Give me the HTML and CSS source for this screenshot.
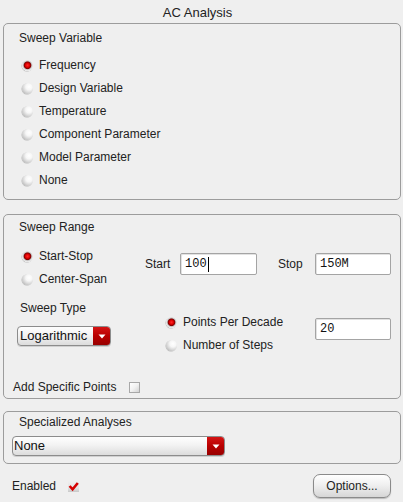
FILE: index.html
```html
<!DOCTYPE html>
<html>
<head>
<meta charset="utf-8">
<link rel="stylesheet" href="styles.css">
</head>
<body>
<div class="title">AC Analysis</div>

<section class="group g1">
  <div class="legend">Sweep Variable</div>
  <div class="radio-list">
    <div class="radio-row"><span class="radio on"></span>Frequency</div>
    <div class="radio-row"><span class="radio"></span>Design Variable</div>
    <div class="radio-row"><span class="radio"></span>Temperature</div>
    <div class="radio-row"><span class="radio"></span>Component Parameter</div>
    <div class="radio-row"><span class="radio"></span>Model Parameter</div>
    <div class="radio-row"><span class="radio"></span>None</div>
  </div>
</section>

<section class="group g2">
  <div class="legend">Sweep Range</div>
  <div class="range-row">
    <div class="radio-col">
      <div class="radio-row"><span class="radio on"></span>Start-Stop</div>
      <div class="radio-row"><span class="radio"></span>Center-Span</div>
    </div>
    <div class="field">
      <span class="field-label start-label">Start</span>
      <span class="input in-start">100<span class="caret"></span></span>
    </div>
    <div class="field">
      <span class="field-label stop-label">Stop</span>
      <span class="input in-stop">150M</span>
    </div>
  </div>
  <div class="type-row">
    <div class="type-col">
      <div class="sublabel">Sweep Type</div>
      <div class="select sel-log">
        <span class="select-text">Logarithmic</span>
        <span class="select-btn"><svg width="8" height="5" viewBox="0 0 8 5"><path d="M0.5 0.5 L7.5 0.5 L4 4.5 Z" fill="#fff"/></svg></span>
      </div>
    </div>
    <div class="points-col">
      <div class="radio-row"><span class="radio on"></span>Points Per Decade</div>
      <div class="radio-row"><span class="radio"></span>Number of Steps</div>
    </div>
    <span class="input in-steps">20</span>
  </div>
  <div class="add-row">Add Specific Points<span class="checkbox"></span></div>
</section>

<section class="group g3">
  <div class="legend">Specialized Analyses</div>
  <div class="select sel-none">
    <span class="select-text">None</span>
    <span class="select-btn"><svg width="8" height="5" viewBox="0 0 8 5"><path d="M0.5 0.5 L7.5 0.5 L4 4.5 Z" fill="#fff"/></svg></span>
  </div>
</section>

<div class="bottom-row">
  <span class="enabled">Enabled</span>
  <span class="checkmark"><svg width="11" height="11" viewBox="0 0 11 11"><path d="M1.6 5.0 L4.6 8.3 L9.8 2.0" fill="none" stroke="#d40000" stroke-width="2.6" stroke-linejoin="miter"/></svg></span>
  <span class="spacer"></span>
  <span class="button">Options...</span>
</div>
</body>
</html>
```

FILE: styles.css
```css
html, body {
  margin: 0;
  padding: 0;
}
body {
  width: 403px;
  height: 502px;
  background: #efefef;
  font-family: "Liberation Sans", Arial, sans-serif;
  font-size: 12px;
  color: #222222;
  overflow: hidden;
}
.title {
  height: 21px;
  padding-top: 2px;
  line-height: 21px;
  font-size: 13px;
  text-align: center;
  padding-right: 8px;
}
.group {
  margin: 0 2px 0 3px;
  border: 1px solid #9c9c9c;
  border-radius: 5px;
  box-sizing: border-box;
}
.legend {
  line-height: 16px;
  height: 16px;
  margin-left: 15px;
}
.g1 {
  padding-bottom: 7px;
}
.g1 .legend {
  margin-top: 6px;
}
.radio-list {
  margin-top: 8px;
  margin-left: 18px;
}
.radio-row {
  display: flex;
  align-items: center;
  height: 23px;
  line-height: 23px;
  white-space: nowrap;
}
.radio {
  width: 11px;
  height: 11px;
  border-radius: 50%;
  margin-right: 6px;
  flex: none;
  background: radial-gradient(circle at 64% 34%, #ffffff 0%, #f6f6f6 32%, #d2d2d2 64%, #9c9c9c 100%);
  box-shadow: -0.5px 0.5px 0 #b6b6b6;
}
.radio.on {
  background: radial-gradient(circle at 50% 48%, #ff2a2a 0%, #e00000 26%, #800000 42%, #c8c8c8 54%, #f2f2f2 70%, #b0b0b0 100%);
}

.g2 {
  margin-top: 14px;
  padding-bottom: 3px;
}
.g2 .legend {
  margin-top: 4px;
}
.range-row {
  display: flex;
  margin-top: 10px;
  margin-left: 18px;
}
.radio-col {
  width: 123px;
}
.field {
  display: flex;
  align-items: center;
  height: 22px;
  margin-top: 8px;
}
.field-label {
  display: block;
}
.start-label {
  width: 35px;
}
.stop-label {
  width: 37px;
  margin-left: 21px;
}
.input {
  display: flex;
  align-items: center;
  box-sizing: border-box;
  height: 22px;
  background: #ffffff;
  border: 1px solid #a4a4a4;
  border-radius: 2px;
  box-shadow: inset 1px 1px 0 #e2e2e2;
  padding-left: 4px;
  font-family: "Liberation Mono", "Courier New", monospace;
  font-size: 12px;
  color: #111;
}
.in-start {
  width: 77px;
}
.in-stop {
  width: 76px;
}
.in-steps {
  width: 76px;
  margin-top: 18px;
}
.caret {
  display: inline-block;
  width: 1px;
  height: 15px;
  background: #000;
  margin-left: 1px;
}
.type-row {
  display: flex;
  margin-top: 9px;
  margin-left: 13px;
  height: 56px;
}
.type-col {
  width: 149px;
}
.sublabel {
  line-height: 16px;
  height: 16px;
  margin-left: 3px;
}
.select {
  display: flex;
  box-sizing: border-box;
  height: 20px;
  border: 1px solid #8c8c8c;
  border-radius: 4px;
  background: linear-gradient(#fefefe 0%, #f3f3f3 45%, #dcdcdc 100%);
  overflow: hidden;
  box-shadow: 0 1px 0 #d0d0d0;
}
.sel-log {
  width: 94px;
  margin-top: 10px;
}
.select-text {
  flex: 1;
  line-height: 18px;
  padding-left: 2px;
  font-size: 13px;
  color: #111;
}
.select-btn {
  width: 17px;
  display: flex;
  align-items: center;
  justify-content: center;
  background: linear-gradient(#d41414 0%, #b80000 50%, #980000 100%);
}
.points-col {
  width: 149px;
  margin-top: 11px;
}
.add-row {
  display: flex;
  align-items: center;
  margin-top: 23px;
  margin-left: 9px;
  height: 16px;
  line-height: 16px;
}
.checkbox {
  width: 11px;
  height: 11px;
  box-sizing: border-box;
  margin-left: 13px;
  border: 1px solid #a8a8a8;
  background: linear-gradient(135deg, #ffffff 0%, #f2f2f2 50%, #d2d2d2 100%);
}

.g3 {
  margin-top: 12px;
  padding-bottom: 7px;
}
.g3 .legend {
  margin-top: 2px;
}
.sel-none {
  width: 213px;
  margin-top: 6px;
  margin-left: 8px;
}
.sel-none .select-text {
  padding-left: 1px;
}

.bottom-row {
  display: flex;
  align-items: center;
  height: 24px;
  margin-top: 10px;
  padding-left: 12px;
  padding-right: 12px;
}
.enabled {
  line-height: 16px;
}
.checkmark {
  display: flex;
  width: 11px;
  height: 11px;
  margin-left: 12px;
  background: linear-gradient(#efefef 0%, #e4e4e4 60%, #c9c9c9 100%);
}
.spacer {
  flex: 1;
}
.button {
  box-sizing: border-box;
  width: 78px;
  height: 24px;
  line-height: 22px;
  text-align: center;
  border: 1px solid #8a8a8a;
  border-radius: 7px;
  background: linear-gradient(#ffffff 0%, #f0f0f0 45%, #d6d6d6 100%);
  box-shadow: 0 1px 1px #bbbbbb;
  color: #1e1e1e;
}
```
